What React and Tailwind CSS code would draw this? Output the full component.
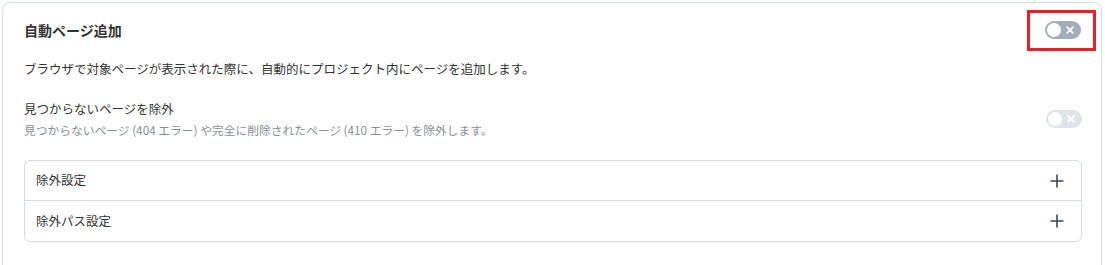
import React from "react";

function Toggle({ light }) {
  return (
    <div
      className={`relative flex h-[18px] w-[36px] items-center rounded-full ${
        light ? "bg-[#dfe5ec]" : "bg-[#a1afbd]"
      }`}
    >
      <div className="absolute left-[2px] top-[2px] h-[14px] w-[14px] rounded-full bg-white" />
      <svg
        className="absolute right-[7px] top-[5px]"
        width="8"
        height="8"
        viewBox="0 0 8 8"
      >
        <path d="M1.2 1.2 L6.8 6.8 M6.8 1.2 L1.2 6.8" stroke="white" strokeWidth="1.8" strokeLinecap="round" />
      </svg>
    </div>
  );
}

function Plus() {
  return (
    <svg width="14" height="14" viewBox="0 0 14 14">
      <path d="M7 0.5 V13.5 M0.5 7 H13.5" stroke="#3d4654" strokeWidth="1.6" />
    </svg>
  );
}

export default function App() {
  return (
    <div
      className="h-[265px] w-[1105px] overflow-hidden bg-white pl-[2px] pr-[3px] pt-[2px]"
      style={{ fontFamily: '"Noto Sans CJK JP", "Noto Sans", sans-serif' }}
    >
      <div className="rounded-[8px] border border-[#d5dbe2] pb-[60px] pl-[21px] pr-[19px] pt-[17px]">
        <div className="flex h-[20px] items-center justify-between">
          <div className="text-[14px] font-bold leading-[20px] text-[#333]">自動ページ追加</div>
          <div className="relative mr-[1px]">
            <Toggle />
            <div className="pointer-events-none absolute -bottom-[12px] -left-[18px] -right-[15px] -top-[11px] border-[3px] border-[#e8202a]" />
          </div>
        </div>
        <div className="mt-[19px] text-[12.5px] leading-[20px] text-[#333]">
          ブラウザで対象ページが表示された際に、自動的にプロジェクト内にページを追加します。
        </div>
        <div className="mt-[20px] flex items-center justify-between">
          <div>
            <div className="text-[12.5px] leading-[20px] text-[#333]">見つからないページを除外</div>
            <div className="mt-[2px] text-[11.75px] leading-[18px] text-[#8a8f96]">
              見つからないページ (404 エラー) や完全に削除されたページ (410 エラー) を除外します。
            </div>
          </div>
          <Toggle light />
        </div>
        <div className="mt-[21px] rounded-[6px] border border-[#d5dbe2]">
          <div className="flex h-[40px] items-center justify-between border-b border-[#d5dbe2] pl-[11px] pr-[17px]">
            <span className="text-[12.5px] text-[#333]">除外設定</span>
            <Plus />
          </div>
          <div className="flex h-[40px] items-center justify-between pl-[11px] pr-[17px]">
            <span className="text-[12.5px] text-[#333]">除外パス設定</span>
            <Plus />
          </div>
        </div>
      </div>
    </div>
  );
}
